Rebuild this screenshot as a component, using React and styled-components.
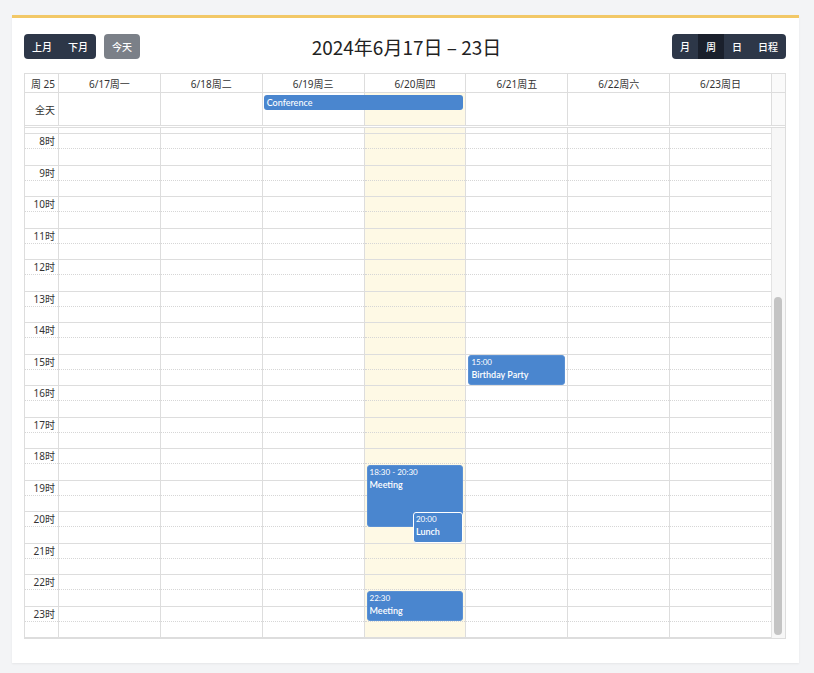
import React, { useLayoutEffect, useRef } from "react";
import styled, { createGlobalStyle, css } from "styled-components";

const HOUR = 31.5;
const VIEW = 510;
const CONTENT = HOUR * 24;
const THUMB = (VIEW * VIEW) / CONTENT;
const FIRST_VISIBLE = 8;

const GlobalStyle = createGlobalStyle`
  * { box-sizing: border-box; }
  html, body { margin: 0; padding: 0; background: #f3f4f6; }
  body { font-family: "Noto Sans", "Noto Sans CJK SC", sans-serif; color: #333; }
`;

const Page = styled.div`
  padding: 15px 15px 9px 12px;
`;

const Card = styled.div`
  background: #fff;
  border-top: 3px solid #f2c867;
  padding: 15px 13px 24px 12px;
  box-shadow: 0 1px 2px rgba(0, 0, 0, 0.06);
`;

const Toolbar = styled.div`
  display: grid;
  grid-template-columns: 1fr auto 1fr;
  align-items: center;
  height: 25px;
  margin-bottom: 15px;
`;

const Left = styled.div`
  display: flex;
  gap: 8px;
`;

const Right = styled.div`
  display: flex;
  justify-content: flex-end;
`;

const Group = styled.div`
  display: flex;
  border-radius: 4px;
  overflow: hidden;
  background: ${(p) => (p.$gray ? "#7b8088" : "#2d3748")};
`;

const Btn = styled.button`
  border: 0;
  margin: 0;
  height: 25px;
  padding: 0 8px;
  font-family: "Noto Sans CJK SC", sans-serif;
  font-size: 10px;
  font-weight: 500;
  color: #fff;
  background: ${(p) => (p.$active ? "#1a202c" : "transparent")};
  cursor: pointer;
`;

const Title = styled.div`
  font-family: "Noto Sans CJK SC", sans-serif;
  font-size: 19px;
  color: #222;
  padding-left: 3px;
`;

const Calendar = styled.div`
  border: 1px solid #ddd;
  font-family: "Noto Sans", "Noto Sans CJK SC", sans-serif;
`;

const HeaderRow = styled.div`
  display: grid;
  grid-template-columns: 33px repeat(7, 1fr) 14px;
  height: 19px;
  border-bottom: 1px solid #ddd;
`;

const HeadCell = styled.div`
  display: flex;
  align-items: center;
  justify-content: ${(p) => (p.$gutter ? "flex-end" : "center")};
  padding-right: ${(p) => (p.$gutter ? "3px" : "0")};
  font-size: 10px;
  color: #333;
  border-left: ${(p) => (p.$first ? "0" : "1px solid #ddd")};
  background: ${(p) => (p.$spacer ? "#fafafa" : "transparent")};
  white-space: nowrap;
`;

const AllDayRow = styled.div`
  display: grid;
  grid-template-columns: 33px repeat(7, 1fr) 14px;
  height: 33px;
  border-bottom: 1px solid #ddd;
`;

const AllDayCell = styled.div`
  grid-row: 1;
  grid-column: ${(p) => p.$col};
  display: flex;
  align-items: center;
  justify-content: flex-end;
  padding-right: 3px;
  font-size: 10px;
  color: #333;
  border-left: ${(p) => (p.$first ? "0" : "1px solid #ddd")};
  background: ${(p) => (p.$today ? "#fef9e5" : p.$spacer ? "#fafafa" : "transparent")};
`;

const AllDayEvent = styled.div`
  grid-row: 1;
  grid-column: ${(p) => p.$col};
  align-self: start;
  margin: 2px 2px 0 2px;
  height: 15px;
  line-height: 15px;
  padding: 0 3px;
  border-radius: 3px;
  background: #4a86cf;
  color: #fff;
  font-family: "Lato", "Noto Sans", sans-serif;
  font-size: 9px;
  font-weight: 500;
  z-index: 1;
`;

const Separator = styled.div`
  height: 1px;
  border-bottom: 1px solid #ddd;
  box-sizing: content-box;
`;

const ScrollArea = styled.div`
  display: flex;
  height: ${VIEW}px;
`;

const Viewport = styled.div`
  flex: 1;
  min-width: 0;
  overflow: hidden;
`;

const Track = styled.div`
  width: 14px;
  flex: none;
  background: #f7f7f7;
  border-left: 1px solid #e3e3e3;
  display: flex;
  flex-direction: column;
  justify-content: flex-end;
  padding: 3px 2px;
`;

const Thumb = styled.div`
  width: 8px;
  border-radius: 4px;
  background: #c4c4c4;
`;

const Body = styled.div`
  display: grid;
  grid-template-columns: 33px repeat(7, 1fr);
`;

const Column = styled.div`
  position: relative;
  border-left: ${(p) => (p.$first ? "0" : "1px solid #ddd")};
  background: ${(p) => (p.$today ? "#fef9e5" : "transparent")};
`;

const Slot = styled.div`
  height: ${HOUR}px;
  border-bottom: 1px solid #ddd;
  display: flex;
  flex-direction: column;
`;

const HalfSlot = styled.div`
  height: 50%;
  border-bottom: 1px dotted #d6d6d6;
  text-align: right;
  padding: 1px 3px 0 0;
  font-size: 10px;
  line-height: 12px;
  color: #333;
  white-space: nowrap;
`;

const Event = styled.div`
  position: absolute;
  left: 2px;
  right: 2px;
  border-radius: 3px;
  background: #4a86cf;
  border: 1px solid #5b91d4;
  color: #fff;
  padding: 1px 2px;
  font-family: "Lato", "Noto Sans", sans-serif;
  overflow: hidden;
  z-index: 1;
  ${(p) =>
    p.$overlap &&
    css`
      left: 48%;
      border-color: #fff;
      z-index: 2;
    `}
`;

const EventTime = styled.div`
  font-size: 8px;
  line-height: 10px;
  white-space: nowrap;
`;

const EventTitle = styled.div`
  font-size: 9px;
  font-weight: 600;
  line-height: 12px;
  margin-top: 2px;
  white-space: nowrap;
`;

const days = [
  "6/17周一",
  "6/18周二",
  "6/19周三",
  "6/20周四",
  "6/21周五",
  "6/22周六",
  "6/23周日",
];
const TODAY = 3;

const events = [
  { day: 4, start: 15, end: 16, time: "15:00", title: "Birthday Party" },
  { day: 3, start: 18.5, end: 20.5, time: "18:30 - 20:30", title: "Meeting" },
  { day: 3, start: 20, end: 21, time: "20:00", title: "Lunch", overlap: true },
  { day: 3, start: 22.5, end: 23.5, time: "22:30", title: "Meeting" },
];

const hours = Array.from({ length: 24 }, (_, i) => i);

export default function App() {
  const ref = useRef(null);
  useLayoutEffect(() => {
    if (ref.current) ref.current.scrollTop = ref.current.scrollHeight;
  }, []);

  return (
    <>
      <GlobalStyle />
      <Page>
        <Card>
          <Toolbar>
            <Left>
              <Group>
                <Btn>上月</Btn>
                <Btn>下月</Btn>
              </Group>
              <Group $gray>
                <Btn>今天</Btn>
              </Group>
            </Left>
            <Title>2024年6月17日 – 23日</Title>
            <Right>
              <Group>
                <Btn>月</Btn>
                <Btn $active>周</Btn>
                <Btn>日</Btn>
                <Btn>日程</Btn>
              </Group>
            </Right>
          </Toolbar>

          <Calendar>
            <HeaderRow>
              <HeadCell $gutter $first>
                周 25
              </HeadCell>
              {days.map((d) => (
                <HeadCell key={d}>{d}</HeadCell>
              ))}
              <HeadCell $spacer />
            </HeaderRow>

            <AllDayRow>
              <AllDayCell $col={1} $first>
                全天
              </AllDayCell>
              {days.map((d, i) => (
                <AllDayCell key={d} $col={i + 2} $today={i === TODAY} />
              ))}
              <AllDayCell $col={9} $spacer />
              <AllDayEvent $col="4 / 6">Conference</AllDayEvent>
            </AllDayRow>

            <Separator />

            <ScrollArea>
              <Viewport ref={ref}>
                <Body>
                  <Column $first>
                    {hours.map((h) => (
                      <Slot key={h}>
                        <HalfSlot>{h >= FIRST_VISIBLE ? `${h}时` : null}</HalfSlot>
                      </Slot>
                    ))}
                  </Column>
                  {days.map((d, i) => (
                    <Column key={d} $today={i === TODAY}>
                      {hours.map((h) => (
                        <Slot key={h}>
                          <HalfSlot />
                        </Slot>
                      ))}
                      {events
                        .filter((e) => e.day === i)
                        .map((e, k) => (
                          <Event
                            key={k}
                            $overlap={e.overlap}
                            style={{
                              top: e.start * HOUR,
                              height: (e.end - e.start) * HOUR - 1,
                            }}
                          >
                            <EventTime>{e.time}</EventTime>
                            <EventTitle>{e.title}</EventTitle>
                          </Event>
                        ))}
                    </Column>
                  ))}
                </Body>
              </Viewport>
              <Track>
                <Thumb style={{ height: THUMB - 6 }} />
              </Track>
            </ScrollArea>
          </Calendar>
        </Card>
      </Page>
    </>
  );
}
